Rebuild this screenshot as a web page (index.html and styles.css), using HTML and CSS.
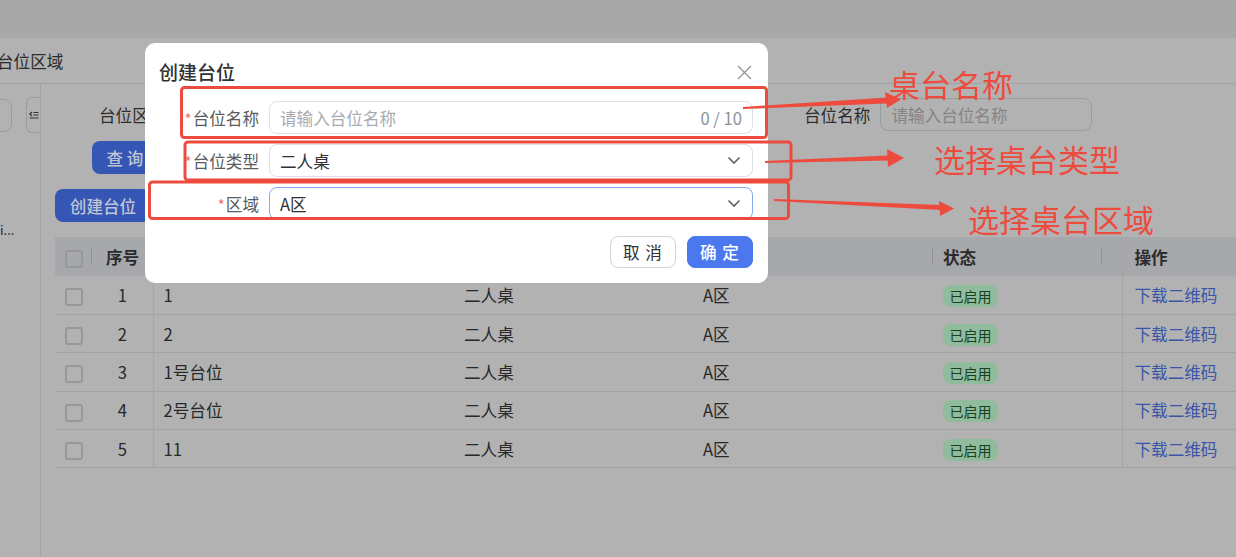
FILE: index.html
```html
<!DOCTYPE html>
<html lang="zh-CN">
<head>
<meta charset="utf-8">
<title>台位区域</title>
<link rel="stylesheet" href="styles.css">
</head>
<body>
<div class="app">
  <header class="topbar"></header>
  <nav class="tabs"><span class="tab">台位区域</span></nav>
  <div class="layout">
    <aside class="sidebar">
      <div class="side-top">
        <div class="side-search"></div>
        <button class="fold" type="button">
          <svg width="10" height="8" viewBox="0 0 10 8"><path d="M3 1 L0.8 3 L3 5" fill="none" stroke="#333" stroke-width="1.2"/><path d="M4.5 1.5 H9.5 M4.5 4 H9.5 M0.5 7 H9.5" stroke="#333" stroke-width="1.2"/></svg>
        </button>
      </div>
      <div class="side-item">i...</div>
    </aside>
    <main class="main">
      <div class="filters">
        <div class="field f1"><span class="flabel">台位区域</span><div class="finput"></div></div>
        <div class="field f2"><span class="flabel">台位名称</span><div class="finput ph">请输入台位名称</div></div>
      </div>
      <div class="row-query"><button class="pbtn q" type="button">查 询</button></div>
      <div class="row-create"><button class="pbtn c" type="button">创建台位</button></div>
      <table class="grid">
        <colgroup>
          <col style="width:37px"><col style="width:61px"><col style="width:301px"><col style="width:239px"><col style="width:240px"><col style="width:189px"><col style="width:140px">
        </colgroup>
        <thead>
          <tr>
            <th class="ck sep"><span class="box"></span></th>
            <th class="num">序号</th>
            <th class="pl">台位名称</th>
            <th class="pl">台位类型</th>
            <th class="pl sep">区域</th>
            <th class="pl sep2">状态</th>
            <th class="op">操作</th>
          </tr>
        </thead>
        <tbody>
          <tr><td class="ck"><span class="box"></span></td><td class="num">1</td><td class="pl name">1</td><td class="pl">二人桌</td><td class="pl">A区</td><td class="st"><span class="tag">已启用</span></td><td class="op"><span class="link">下载二维码</span></td></tr>
          <tr><td class="ck"><span class="box"></span></td><td class="num">2</td><td class="pl name">2</td><td class="pl">二人桌</td><td class="pl">A区</td><td class="st"><span class="tag">已启用</span></td><td class="op"><span class="link">下载二维码</span></td></tr>
          <tr><td class="ck"><span class="box"></span></td><td class="num">3</td><td class="pl name">1号台位</td><td class="pl">二人桌</td><td class="pl">A区</td><td class="st"><span class="tag">已启用</span></td><td class="op"><span class="link">下载二维码</span></td></tr>
          <tr><td class="ck"><span class="box"></span></td><td class="num">4</td><td class="pl name">2号台位</td><td class="pl">二人桌</td><td class="pl">A区</td><td class="st"><span class="tag">已启用</span></td><td class="op"><span class="link">下载二维码</span></td></tr>
          <tr><td class="ck"><span class="box"></span></td><td class="num">5</td><td class="pl name">11</td><td class="pl">二人桌</td><td class="pl">A区</td><td class="st"><span class="tag">已启用</span></td><td class="op"><span class="link">下载二维码</span></td></tr>
        </tbody>
      </table>
    </main>
  </div>
</div>

<div class="dialog">
  <div class="dlg-head">
    <span class="dlg-title">创建台位</span>
    <svg class="dlg-close" width="15" height="15" viewBox="0 0 15 15"><path d="M1 1 L14 14 M14 1 L1 14" stroke="#8f9297" stroke-width="1.3" fill="none"/></svg>
  </div>
  <div class="form">
    <div class="frow">
      <span class="lbl"><i class="req">*</i>台位名称</span>
      <div class="inp"><span class="ph2">请输入台位名称</span><span class="count">0 / 10</span></div>
    </div>
    <div class="frow">
      <span class="lbl"><i class="req">*</i>台位类型</span>
      <div class="inp"><span class="val">二人桌</span><svg class="chev" width="14" height="9" viewBox="0 0 14 9"><path d="M1.5 1.5 L7 7 L12.5 1.5" fill="none" stroke="#5f6266" stroke-width="1.6"/></svg></div>
    </div>
    <div class="frow">
      <span class="lbl"><i class="req">*</i>区域</span>
      <div class="inp focus"><span class="val">A区</span><svg class="chev" width="14" height="9" viewBox="0 0 14 9"><path d="M1.5 1.5 L7 7 L12.5 1.5" fill="none" stroke="#5f6266" stroke-width="1.6"/></svg></div>
    </div>
  </div>
  <div class="dlg-foot">
    <button class="btn" type="button">取 消</button>
    <button class="btn primary" type="button">确 定</button>
  </div>
</div>

<svg class="annot" width="1236" height="557" viewBox="0 0 1236 557">
  <g fill="none" stroke="#ee4b3f" stroke-width="3" stroke-linejoin="round">
    <rect x="181.5" y="87.5" width="585" height="50" rx="3"/>
    <rect x="185" y="142" width="606" height="38" rx="3"/>
    <rect x="149.5" y="182" width="639" height="36.5" rx="3"/>
  </g>
  <g fill="#ee4b3f">
    <polygon points="743,107 743,109 887,103.5 887,97.5"/>
    <polygon points="885,92 901,99.5 887,108"/>
    <polygon points="765,161 765,163 889,160.5 889,155.5"/>
    <polygon points="887,149 904,158 888,167"/>
    <polygon points="774,199 774,201 941,210 941,205"/>
    <polygon points="939,201 954,208.5 940,216"/>
  </g>
  <g fill="#ee4b3f" class="annot-text">
    <text x="889" y="97">桌台名称</text>
    <text x="934" y="172">选择桌台类型</text>
    <text x="968" y="232">选择桌台区域</text>
  </g>
</svg>
</body>
</html>
```

FILE: styles.css
```css
* { box-sizing: border-box; }
html, body { margin: 0; padding: 0; }
body {
  width: 1236px;
  height: 557px;
  overflow: hidden;
  position: relative;
  background: #b2b2b2;
  font-family: "Noto Sans CJK SC", "Noto Sans", sans-serif;
  font-size: 16.6px;
  color: #2a2a2a;
}
button { font-family: inherit; }

.app { display: flex; flex-direction: column; height: 557px; }
.topbar { height: 38px; background: #a8a8a8; flex: none; }
.tabs {
  height: 46px; flex: none;
  border-bottom: 1px solid #a2a2a2;
  display: flex; align-items: center;
}
.tab { margin-left: -3px; font-size: 16.6px; color: #2c2c2c; line-height: 20px; }

.layout { flex: 1; display: flex; min-height: 0; }
.sidebar {
  width: 41px; flex: none;
  border-right: 1px solid #a2a2a2;
  overflow: hidden;
  padding-top: 13px;
}
.side-top { display: flex; align-items: center; }
.side-search {
  flex: none; width: 40px; height: 33px; margin-left: -28px;
  border: 1px solid #9b9b9b; border-radius: 8px; background: #b2b2b2;
}
.fold {
  flex: none; margin-left: 14px; width: 14px; height: 36px;
  border: 1px solid #9b9b9b; border-right: none; border-radius: 6px 0 0 6px;
  background: #b2b2b2; padding: 0 0 0 2px;
  display: flex; align-items: center; justify-content: flex-start;
}
.side-item { margin-top: 90px; font-size: 13px; line-height: 14px; color: #2a2a2a; }

.main { flex: 1; min-width: 0; overflow: hidden; padding: 14px 0 0 14px; }
.filters { display: flex; align-items: center; height: 33px; padding-left: 44px; }
.field { display: flex; align-items: center; gap: 10px; }
.f1 { width: 705px; }
.flabel { font-size: 16.6px; color: #2e2e2e; white-space: nowrap; }
.finput {
  width: 212px; height: 33px; border: 1px solid #9c9c9c; border-radius: 8px;
  display: flex; align-items: center; padding-left: 10px;
}
.finput.ph { color: #858585; }

.row-query { margin-top: 10px; padding-left: 37px; display: flex; }
.row-create { margin-top: 15px; display: flex; }
.pbtn {
  height: 33px; border: none; border-radius: 8px;
  background: #3556b4; color: #bfc5d4; font-size: 16.6px; font-weight: 500;
}
.pbtn.q { width: 66px; }
.pbtn.c { width: 96px; }

.grid {
  margin-top: 15px;
  border-collapse: collapse;
  table-layout: fixed;
  width: 1207px;
}
.grid th {
  height: 39px; background: #a7a8ab; font-weight: 700; font-size: 16.6px;
  color: #2b2b2b; text-align: left; padding: 0; position: relative;
}
.grid td {
  height: 38.4px; padding: 0; border-bottom: 1px solid #a3a3a3;
  color: #282828; vertical-align: middle;
}
.grid .ck { text-align: center; }
.grid .num { text-align: center; }
.grid .pl { padding-left: 10px; }
.grid .st { padding-left: 10px; }
.grid td.name { border-left: 1px solid #a5a5a5; }
.grid .op { border-left: 1px solid #a3a3a3; padding-left: 12px; }
.grid th.sep::after, .grid th.sep2::after {
  content: ""; position: absolute; top: 12px; width: 1px; height: 15px; background: #909194;
}
.grid th.sep::after { right: 0; }
.grid th.sep2::after { right: 20px; }
.box {
  display: inline-block; width: 18px; height: 18px; vertical-align: middle;
  border: 2px solid #97989a; border-radius: 3px; background: #b2b2b2;
}
th .box { background: #a7a8ab; }
.tag {
  display: inline-flex; align-items: center; justify-content: center;
  height: 22px; width: 55px; border-radius: 8px;
  background: #90bb9c; color: #173f25; font-size: 14px;
}
.link { color: #3a55a8; }

/* dialog */
.dialog {
  position: absolute; left: 145px; top: 43px; width: 623px;
  background: #fff; border-radius: 10px;
  padding: 16px 15px 15px 14px;
}
.dlg-head { display: flex; align-items: center; justify-content: space-between; height: 26px; }
.dlg-title { font-size: 19px; font-weight: 500; color: #303133; line-height: 26px; }
.dlg-close { margin-right: 1px; }
.form { margin-top: 16px; display: flex; flex-direction: column; gap: 10px; }
.frow { display: grid; grid-template-columns: 100px 1fr; column-gap: 10px; height: 33px; align-items: center; }
.lbl { text-align: right; color: #5a5c61; white-space: nowrap; }
.req { font-style: normal; color: #f56c6c; margin-right: 1px; font-size: 15px; }
.inp {
  height: 33px; border: 1px solid #dcdfe6; border-radius: 8px;
  display: flex; align-items: center; justify-content: space-between;
  padding: 0 10px 0 10px;
}
.inp.focus { border-color: #84a8f5; }
.ph2 { color: #a8abb2; }
.count { color: #8f9297; }
.val { color: #303133; }
.chev { margin-right: 1px; }
.dlg-foot { margin-top: 16px; display: flex; justify-content: flex-end; gap: 11px; }
.btn {
  height: 32px; width: 66px; border-radius: 8px; border: 1px solid #d0d3d9;
  background: #fff; color: #303133; font-size: 16.6px; padding: 0; letter-spacing: 1px;
}
.btn.primary { background: #4b78ee; border-color: #4b78ee; color: #fff; font-weight: 500; }

.annot { position: absolute; left: 0; top: 0; pointer-events: none; }
.annot-text text { font-family: "Noto Sans CJK SC", sans-serif; font-size: 31px; font-weight: 400; }
```
